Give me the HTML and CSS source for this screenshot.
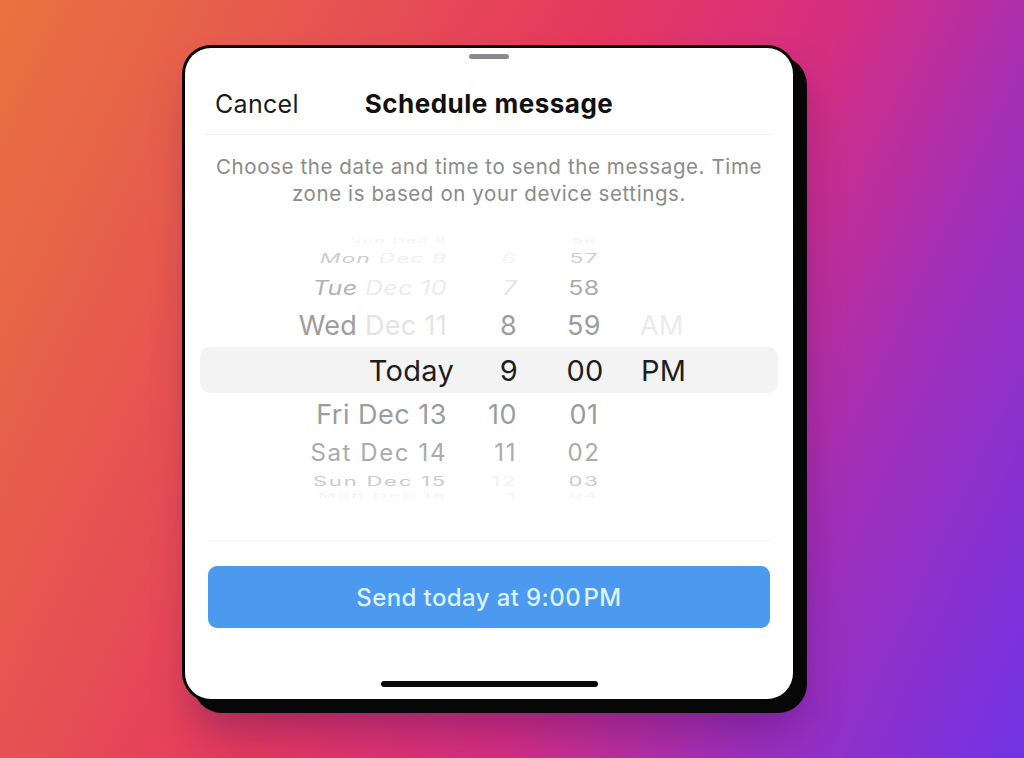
FILE: index.html
```html
<!DOCTYPE html>
<html lang="en">
<head>
<meta charset="utf-8">
<title>Schedule message</title>
<link rel="stylesheet" href="styles.css">
</head>
<body>
<div class="stage">
  <div class="sheet">
    <div class="grabber"></div>
    <div class="header">
      <span class="cancel">Cancel</span>
      <span class="title">Schedule message</span>
      <span></span>
    </div>
    <p class="desc">Choose the date and time to send the message. Time<br>zone is based on your device settings.</p>
    <div class="picker">
      <div class="row r-ghost"><span class="day"><span class="a">Sun</span> <span class="b">Dec 8</span></span><span class="hr"></span><span class="mn">56</span><span class="ap"></span></div>
      <div class="row r-mon"><span class="day"><span class="a">Mon</span> <span class="b">Dec 9</span></span><span class="hr">6</span><span class="mn">57</span><span class="ap"></span></div>
      <div class="row r-tue"><span class="day"><span class="a">Tue</span> <span class="b">Dec 10</span></span><span class="hr">7</span><span class="mn">58</span><span class="ap"></span></div>
      <div class="row r-wed"><span class="day"><span class="a">Wed</span> <span class="b">Dec 11</span></span><span class="hr">8</span><span class="mn">59</span><span class="ap">AM</span></div>
      <div class="row r-sel"><span class="day">Today</span><span class="hr">9</span><span class="mn">00</span><span class="ap">PM</span></div>
      <div class="row r-fri"><span class="day">Fri Dec 13</span><span class="hr">10</span><span class="mn">01</span><span class="ap"></span></div>
      <div class="row r-sat"><span class="day">Sat Dec 14</span><span class="hr">11</span><span class="mn">02</span><span class="ap"></span></div>
      <div class="row r-sun"><span class="day">Sun Dec 15</span><span class="hr">12</span><span class="mn">03</span><span class="ap"></span></div>
      <div class="row r-ghost2"><span class="day">Mon Dec 16</span><span class="hr">1</span><span class="mn">04</span><span class="ap"></span></div>
    </div>
    <div class="footer">
      <button class="send">Send today at 9:00&#8202;PM</button>
    </div>
    <div class="home"></div>
  </div>
</div>
</body>
</html>
```

FILE: styles.css
```css
* { box-sizing: border-box; }

html, body {
  margin: 0;
  height: 100%;
}

body {
  width: 1024px;
  height: 758px;
  overflow: hidden;
  font-family: Inter, "Noto Sans", "Liberation Sans", sans-serif;
  background:
    linear-gradient(115deg, #e9733f 0%, #e75a4e 20%, #e5385f 44%, #d52e82 62%, #a12fb8 78%, #7233e6 100%);
}

.stage {
  padding: 48px 0 0 185px;
}

.sheet {
  width: 608px;
  height: 651px;
  background: #fff;
  border-radius: 26px;
  box-shadow:
    0 0 0 3px #070707,
    11px 11px 0 3px #070707,
    10px 30px 40px rgba(50, 10, 90, 0.35);
  display: flex;
  flex-direction: column;
  align-items: stretch;
}

.grabber {
  width: 40px;
  height: 5px;
  border-radius: 3px;
  background: #8a8a8e;
  margin: 6px auto 0;
}

.header {
  margin: 14px 20px 0;
  height: 62px;
  display: grid;
  grid-template-columns: 1fr auto 1fr;
  align-items: center;
  border-bottom: 1px solid #f1f1f1;
  padding: 0 10px;
}

.cancel {
  font-size: 25px;
  color: #1c1c1c;
  letter-spacing: 0.3px;
}

.title {
  font-size: 26px;
  font-weight: 700;
  color: #111;
  letter-spacing: 0.5px;
}

.desc {
  margin: 18px 0 0;
  text-align: center;
  font-size: 20.5px;
  line-height: 27px;
  color: #8b8b8b;
  letter-spacing: 0.6px;
}

.picker {
  margin-top: 30px;
  display: flex;
  flex-direction: column;
}

.row {
  display: grid;
  grid-template-columns: 262px 70px 122px 1fr;
  align-items: center;
  white-space: nowrap;
}

.row .day { text-align: right; }
.row .hr { text-align: right; }
.row .mn { text-align: center; padding-left: 12px; }
.row .ap { padding-left: 1px; }

.r-ghost { height: 8px; font-size: 18px; line-height: 8px; color: #f2f2f2; transform: scaleY(0.35); letter-spacing: 1px; }
.r-ghost .b, .r-ghost .a { color: #f4f4f4; }

.r-mon { height: 28px; font-size: 23px; color: #cdcdcd; transform: scaleY(0.55); font-style: italic; letter-spacing: 1px; }
.r-mon .b { color: #f1f1f1; }
.r-mon .hr { color: #f3f3f3; }
.r-mon .mn { color: #cdcdcd; font-style: normal; }

.r-tue { height: 30px; font-size: 25px; color: #b2b2b2; transform: scaleY(0.78); font-style: italic; letter-spacing: 0.4px; }
.r-tue .b { color: #ececec; }
.r-tue .hr { color: #e6e6e6; }
.r-tue .mn { color: #ababab; font-style: normal; }

.r-wed { height: 44px; font-size: 27px; color: #9d9d9d; letter-spacing: 0.3px; }
.r-wed .b { color: #e4e4e4; }
.r-wed .mn { color: #9d9d9d; }
.r-wed .ap { color: #ebebeb; }

.r-sel {
  height: 46px;
  font-size: 29px;
  color: #1e1e1e;
  background: #f3f3f3;
  border-radius: 10px;
  margin: 0 15px;
  grid-template-columns: 254px 64px 122px 1fr;
  letter-spacing: 0.3px;
}

.r-fri { height: 42px; font-size: 27px; color: #9c9c9c; letter-spacing: 0.5px; }

.r-sat { height: 34px; font-size: 24px; color: #ababab; letter-spacing: 1.6px; }

.r-sun { height: 22px; font-size: 22px; color: #cbcbcb; transform: scaleY(0.58); letter-spacing: 1.8px; }
.r-sun .hr { color: #f1f1f1; }

.r-ghost2 { height: 10px; font-size: 20px; line-height: 10px; color: #f3f3f3; transform: scaleY(0.3); letter-spacing: 1.8px; }

.footer {
  margin: 39px 20px 0;
  border-top: 1px solid #f5f5f5;
  padding: 25px 3px 0;
}

.send {
  display: block;
  width: 100%;
  height: 62px;
  border: none;
  border-radius: 9px;
  background: #4b9af0;
  color: #dcf2ff;
  font-family: Inter, "Noto Sans", "Liberation Sans", sans-serif;
  font-size: 24px;
  font-weight: 500;
  letter-spacing: 0.4px;
}

.home {
  width: 217px;
  height: 6px;
  border-radius: 3px;
  background: #0a0a0a;
  margin: 53px auto 0;
}
```
